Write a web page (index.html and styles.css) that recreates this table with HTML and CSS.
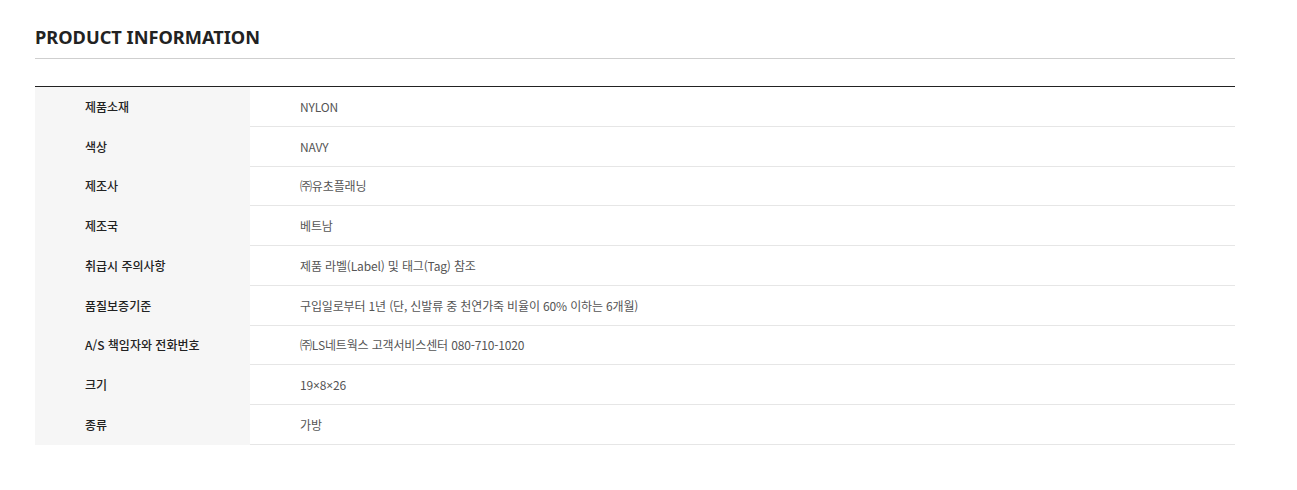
FILE: index.html
```html
<!DOCTYPE html>
<html lang="ko">
<head>
<meta charset="utf-8">
<link rel="stylesheet" href="styles.css">
</head>
<body>
<section class="info">
  <h2 class="info-title">PRODUCT INFORMATION</h2>
  <table class="info-table">
    <tbody>
      <tr><th>제품소재</th><td>NYLON</td></tr>
      <tr><th>색상</th><td>NAVY</td></tr>
      <tr><th>제조사</th><td>㈜유초플래닝</td></tr>
      <tr><th>제조국</th><td>베트남</td></tr>
      <tr><th>취급시 주의사항</th><td>제품 라벨(Label) 및 태그(Tag) 참조</td></tr>
      <tr><th>품질보증기준</th><td>구입일로부터 1년 (단, 신발류 중 천연가죽 비율이 60% 이하는 6개월)</td></tr>
      <tr><th>A/S 책임자와 전화번호</th><td>㈜LS네트웍스 고객서비스센터 080-710-1020</td></tr>
      <tr><th>크기</th><td>19<span class="latin">×</span>8<span class="latin">×</span>26</td></tr>
      <tr><th>종류</th><td>가방</td></tr>
    </tbody>
  </table>
</section>
</body>
</html>
```

FILE: styles.css
```css
html, body {
  margin: 0;
  padding: 0;
  background: #fff;
}
body {
  font-family: "Noto Sans CJK KR", "Noto Sans", sans-serif;
}
.info {
  width: 1200px;
  margin-left: 35px;
  padding-top: 23px;
}
.info-title {
  margin: 0;
  font-family: "Noto Sans", "Noto Sans CJK KR", sans-serif;
  font-size: 18.2px;
  font-weight: 700;
  color: #222;
  line-height: 28px;
  height: 35px;
  border-bottom: 1px solid #cfcfcf;
}
.info-table {
  width: 100%;
  margin-top: 27px;
  border-collapse: collapse;
  border-top: 1px solid #222;
}
.info-table th,
.info-table td {
  height: 39.75px;
  padding: 0 0 0 50px;
  text-align: left;
  font-size: 12px;
  vertical-align: middle;
  box-sizing: border-box;
}
.info-table th {
  width: 215px;
  background: #f6f6f6;
  color: #222;
  font-weight: 500;
  border-bottom: 1px solid #f6f6f6;
}
.info-table td {
  color: #555;
  font-weight: 400;
  letter-spacing: -0.15px;
  border-bottom: 1px solid #e6e6e6;
}
.latin {
  font-family: "Noto Sans", sans-serif;
}
```
